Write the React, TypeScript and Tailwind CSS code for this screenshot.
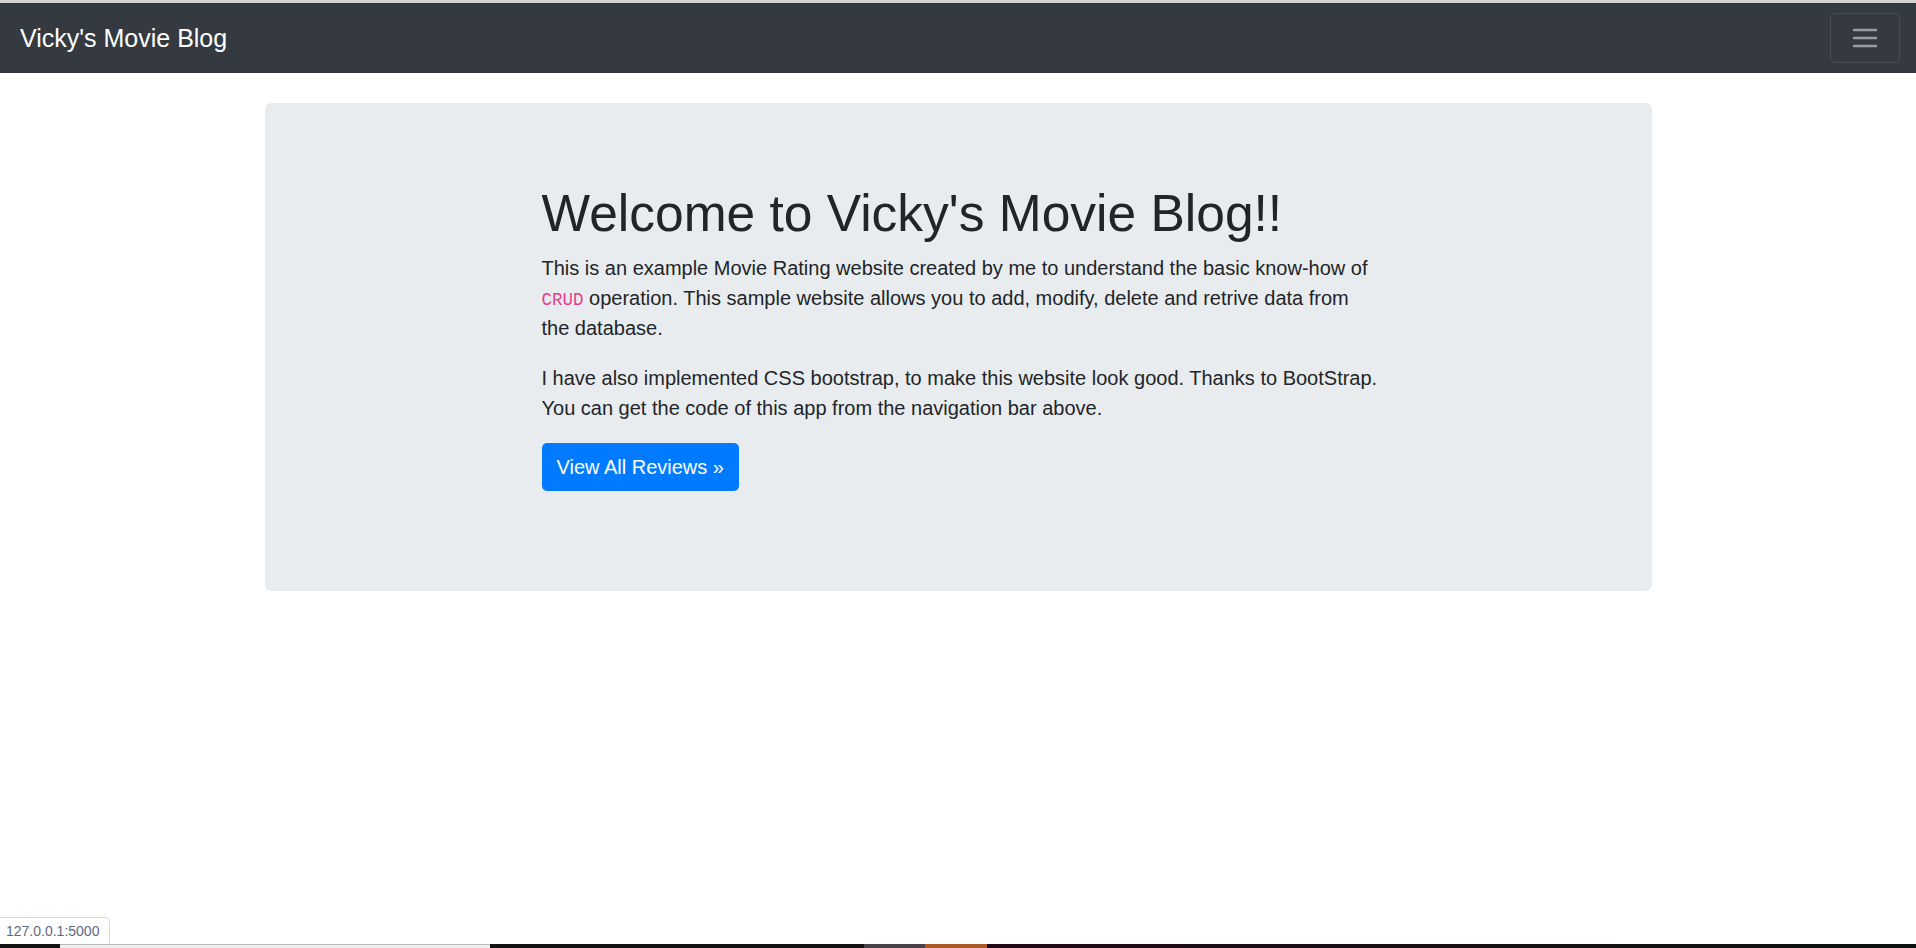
const Toggler = () => (
  <button className="flex h-[50px] w-[70px] items-center justify-center rounded-[5px] border border-white/10">
    <svg width="30" height="30" viewBox="0 0 30 30">
      <path
        d="M4 7h22M4 15h22M4 23h22"
        stroke="rgba(255,255,255,0.5)"
        strokeWidth="2.5"
        strokeLinecap="round"
      />
    </svg>
  </button>
)

const TaskbarStrip = () => (
  <div className="flex h-[4px] w-full shrink-0">
    <div className="w-[60px] bg-[#121212]" />
    <div className="w-[430px] border-t border-[#b8b8b8] bg-[#efefef]" />
    <div className="w-[374px] bg-[#141111]" />
    <div className="w-[61px] bg-[#4a424a]" />
    <div className="w-[62px] bg-[#ad5a24]" />
    <div className="flex-1 bg-gradient-to-r from-[#210a18] to-[#0c1311]" />
  </div>
)

const App = () => {
  return (
    <div className="relative flex h-[948px] flex-col bg-white font-['Liberation_Sans',Arial,sans-serif] text-[#212529]">
      <div className="h-[3px] shrink-0 bg-[#d3d3d3]" />
      <nav className="flex h-[70px] shrink-0 items-center justify-between bg-[#343a40] pl-5 pr-4">
        <a href="#" className="text-[25px] leading-[37px] text-white">
          Vicky's Movie Blog
        </a>
        <Toggler />
      </nav>

      <main className="flex-1">
        <div className="mx-auto mt-[30px] w-[1387px] rounded-[6px] bg-[#e9ecef] px-[40px] pb-[80px] pt-[80px]">
          <div className="ml-[237px] w-[836px]">
            <h1 className="mb-[10px] text-[51.5px] font-medium leading-[60px]">
              Welcome to Vicky's Movie Blog!!
            </h1>
            <p className="mb-[20px] text-[20px] leading-[30px]">
              This is an example Movie Rating website created by me to understand the basic know-how of{' '}
              <code className="font-['Liberation_Mono',monospace] text-[17.5px] leading-none text-[#e83e8c]">CRUD</code>{' '}
              operation. This sample website allows you to add, modify, delete and retrive data from the database.
            </p>
            <p className="mb-[20px] text-[20px] leading-[30px]">
              I have also implemented CSS bootstrap, to make this website look good. Thanks to BootStrap. You can
              get the code of this app from the navigation bar above.
            </p>
            <p className="mb-[20px]">
              <a
                href="#"
                className="inline-block rounded-[5px] bg-[#007bff] px-[15px] py-[9px] text-[20px] leading-[30px] text-white"
              >
                View All Reviews »
              </a>
            </p>
          </div>
        </div>
      </main>

      <div className="absolute bottom-[4px] left-0 flex h-[27px] w-[110px] items-center rounded-tr-[5px] border-r border-t border-[#dadada] bg-white pl-[6px] text-[14px] text-[#5d6a7e]">
        127.0.0.1:5000
      </div>
      <TaskbarStrip />
    </div>
  )
}

export default App
